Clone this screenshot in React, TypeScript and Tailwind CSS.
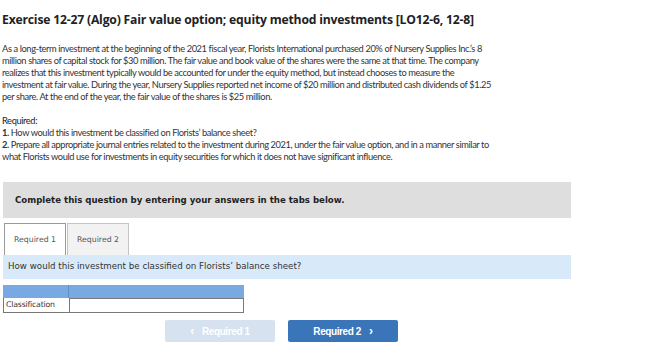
export default function App() {
  return (
    <div className="w-[665px] h-[348px] bg-white overflow-hidden text-[#333]">
      <div className="pl-[2px] pt-[10px] w-[660px]">
        <h1 className="font-['Open_Sans',sans-serif] font-bold text-[12.2px] leading-[20px] text-[#222] tracking-[-0.2px]">
          Exercise 12-27 (Algo) Fair value option; equity method investments [LO12-6, 12-8]
        </h1>
        <p className="mt-[13px] font-['Lato',sans-serif] text-[9.3px] leading-[12px] tracking-[-0.4px] text-[#333] whitespace-nowrap">
          As a long-term investment at the beginning of the 2021 fiscal year, Florists International purchased 20% of Nursery Supplies Inc.’s 8<br />
          million shares of capital stock for $30 million. The fair value and book value of the shares were the same at that time. The company<br />
          realizes that this investment typically would be accounted for under the equity method, but instead chooses to measure the<br />
          investment at fair value. During the year, Nursery Supplies reported net income of $20 million and distributed cash dividends of $1.25<br />
          per share. At the end of the year, the fair value of the shares is $25 million.
        </p>
        <div className="mt-[12px] font-['Lato',sans-serif] text-[9.3px] leading-[12px] tracking-[-0.4px] text-[#333] whitespace-nowrap">
          <p className="text-[#222]">Required:</p>
          <p><b>1.</b> How would this investment be classified on Florists’ balance sheet?</p>
          <p><b>2.</b> Prepare all appropriate journal entries related to the investment during 2021, under the fair value option, and in a manner similar to</p>
          <p>what Florists would use for investments in equity securities for which it does not have significant influence.</p>
        </div>
      </div>

      <div className="ml-[3px] mt-[19px] w-[568px] font-['DejaVu_Sans',sans-serif]">
        <div className="h-[36px] bg-[#dedede] flex items-center pl-[12px]">
          <span className="font-bold text-[8.6px] text-[#222]">
            Complete this question by entering your answers in the tabs below.
          </span>
        </div>
        <div className="flex mt-[5px] h-[32px] pl-[1px]">
          <div className="w-[62px] border border-[#9a9a9a] border-b-0 bg-white flex items-center justify-center text-[7.8px] text-[#555]">
            Required 1
          </div>
          <div className="w-[62px] ml-[1px] border border-[#c4c4c4] border-b-0 bg-[#f2f2f2] flex items-center justify-center text-[7.8px] text-[#555]">
            Required 2
          </div>
        </div>
        <div className="h-[24px] bg-[#d8eaf9] flex items-center pl-[5px] text-[8.7px] text-[#333]">
          How would this investment be classified on Florists’ balance sheet?
        </div>
        <div className="mt-[6px] w-[241px]">
          <div className="flex h-[13px] bg-[#78a9e2]">
            <div className="w-[66px] border-r border-[#5f8fc8]" />
            <div className="flex-1" />
          </div>
          <div className="flex h-[15px]">
            <div className="w-[66px] border-l border-b border-[#777] flex items-center pl-[2px] text-[7.8px] text-[#333] tracking-[-0.2px]">
              Classification
            </div>
            <div className="flex-1 border-[1.5px] border-[#7a7a7a] border-l-[#4a7fc0] bg-white" />
          </div>
        </div>
        <div className="flex mt-[7px] ml-[162px] gap-[13px] font-['Liberation_Sans',sans-serif]">
          <div className="w-[110px] h-[22px] rounded-[2px] bg-[#d6e2f0] flex items-center justify-center text-white font-bold text-[10px] tracking-[-0.4px]">
            <span className="mr-[8px] text-[12px]">‹</span>Required 1
          </div>
          <div className="w-[110px] h-[22px] rounded-[2px] bg-[#3a75b9] flex items-center justify-center text-white font-bold text-[10px] tracking-[-0.4px]">
            Required 2<span className="ml-[8px] text-[12px]">›</span>
          </div>
        </div>
      </div>
    </div>
  );
}
